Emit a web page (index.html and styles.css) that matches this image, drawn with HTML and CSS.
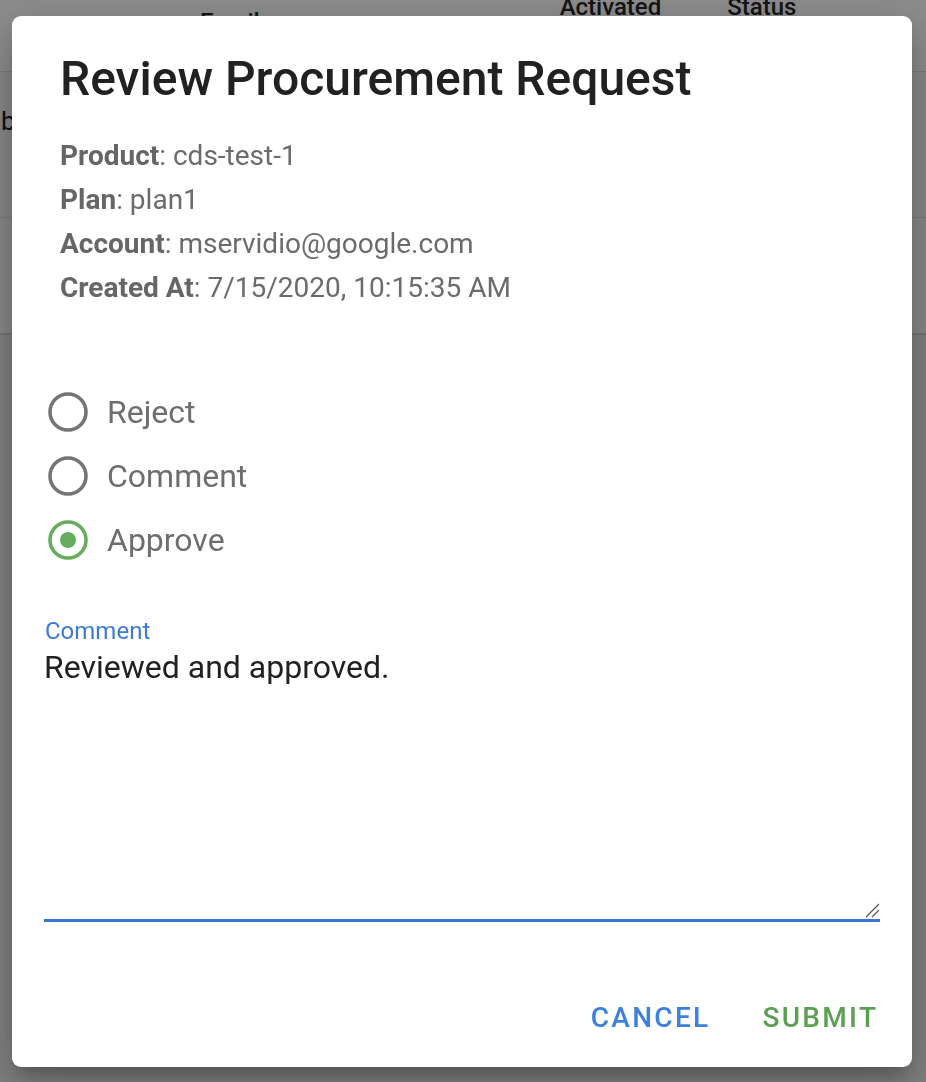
FILE: index.html
```html
<!DOCTYPE html>
<html>
<head>
<meta charset="utf-8">
<link rel="stylesheet" href="styles.css">
</head>
<body>
<div class="page">
  <div class="thead">
    <span class="th th-email">Email</span>
    <span class="th th-act">Activated</span>
    <span class="th th-status">Status</span>
  </div>
  <div class="trow trow-1"><span class="cell">b</span></div>
  <div class="trow trow-2"></div>
  <div class="rest"></div>
</div>
<div class="overlay"></div>
<div class="dialog">
  <h2 class="title">Review Procurement Request</h2>
  <div class="details">
    <div class="line"><b>Product</b>: cds-test-1</div>
    <div class="line"><b>Plan</b>: plan1</div>
    <div class="line"><b>Account</b>: mservidio@google.com</div>
    <div class="line"><b>Created At</b>: 7/15/2020, 10:15:35 AM</div>
  </div>
  <div class="radios">
    <label class="radio">
      <svg class="ring" width="42" height="42" viewBox="0 0 42 42"><circle cx="21" cy="21" r="18" fill="none" stroke="#757575" stroke-width="3.6"/></svg>
      <span class="rlabel">Reject</span>
    </label>
    <label class="radio">
      <svg class="ring" width="42" height="42" viewBox="0 0 42 42"><circle cx="21" cy="21" r="18" fill="none" stroke="#757575" stroke-width="3.6"/></svg>
      <span class="rlabel">Comment</span>
    </label>
    <label class="radio">
      <svg class="ring" width="42" height="42" viewBox="0 0 42 42"><circle cx="21" cy="21" r="18" fill="none" stroke="#66ad5e" stroke-width="3.6"/><circle cx="21" cy="21" r="8" fill="#66ad5e"/></svg>
      <span class="rlabel">Approve</span>
    </label>
  </div>
  <div class="field">
    <div class="flabel">Comment</div>
    <div class="farea">
      <div class="ftext">Reviewed and approved.</div>
      <svg class="grip" width="16" height="16" viewBox="0 0 16 16"><path d="M2 15 L15 2 M8 15 L15 8" stroke="#555" stroke-width="1.2" fill="none"/></svg>
    </div>
  </div>
  <div class="actions">
    <span class="btn btn-cancel">CANCEL</span>
    <span class="btn btn-submit">SUBMIT</span>
  </div>
</div>
</body>
</html>
```

FILE: styles.css
```css
html, body {
  margin: 0;
  padding: 0;
}
body {
  width: 926px;
  height: 1082px;
  overflow: hidden;
  font-family: Roboto, "Liberation Sans", sans-serif;
  background: #ececec;
}
.page {
  display: flex;
  flex-direction: column;
}
.thead {
  height: 71px;
  background: #fff;
  border-bottom: 1px solid #dcdcdc;
  display: flex;
  align-items: flex-start;
}
.th {
  font-size: 24px;
  font-weight: 500;
  color: #262626;
  line-height: 1;
  margin-top: -5px;
}
.th-email { margin-left: 200px; margin-top: 10px; }
.th-act { margin-left: 300px; }
.th-status { margin-left: 66px; }
.trow {
  background: #f7f7f7;
  border-bottom: 1px solid #dddddd;
}
.trow-1 { height: 145px; display: flex; align-items: flex-start; }
.trow-2 { height: 115px; border-bottom: 2px solid #d0d0d0; }
.cell {
  font-size: 26px;
  color: #1a1a1a;
  margin-top: 34px;
  margin-left: 1px;
}
.rest {
  height: 800px;
  background: #eaeaea;
}
.overlay {
  position: fixed;
  inset: 0;
  background: rgba(0, 0, 0, 0.45);
}
.dialog {
  position: fixed;
  left: 12px;
  top: 16px;
  width: 900px;
  height: 1051px;
  background: #fff;
  border-radius: 9px;
  box-shadow: 0 22px 36px 3px rgba(0,0,0,0.14), 0 9px 46px 8px rgba(0,0,0,0.12), 0 11px 15px -7px rgba(0,0,0,0.2);
  display: flex;
  flex-direction: column;
  box-sizing: border-box;
}
.title {
  margin: 35px 0 0 48px;
  font-size: 48px;
  line-height: 56px;
  font-weight: 500;
  color: #212121;
}
.details {
  margin: 27px 0 0 48px;
  font-size: 28px;
  line-height: 44px;
  color: #6b6b6b;
}
.details b {
  font-weight: 700;
  color: #666;
}
.radios {
  margin: 70px 0 0 35px;
  display: flex;
  flex-direction: column;
}
.radio {
  height: 64px;
  display: flex;
  align-items: center;
  gap: 18px;
}
.ring { display: block; }
.rlabel {
  font-size: 32px;
  color: #6e6e6e;
}
.field {
  margin: 45px 32px 0 32px;
  display: flex;
  flex-direction: column;
}
.flabel {
  font-size: 24px;
  line-height: 28px;
  color: #3a7bd5;
  margin-left: 1px;
}
.farea {
  height: 274px;
  border-bottom: 3px solid #3a78cf;
  position: relative;
}
.ftext {
  padding-top: 3px;
  font-size: 32px;
  line-height: 38px;
  color: #212121;
}
.grip {
  position: absolute;
  right: 0;
  bottom: 1px;
}
.actions {
  margin: auto 36px 34px 0;
  display: flex;
  justify-content: flex-end;
  gap: 52px;
}
.btn {
  font-size: 28px;
  font-weight: 500;
  letter-spacing: 2.3px;
  line-height: 30px;
}
.btn-cancel { color: #3c82dc; }
.btn-submit { color: #5c9f53; margin-right: -2.3px; }
```
